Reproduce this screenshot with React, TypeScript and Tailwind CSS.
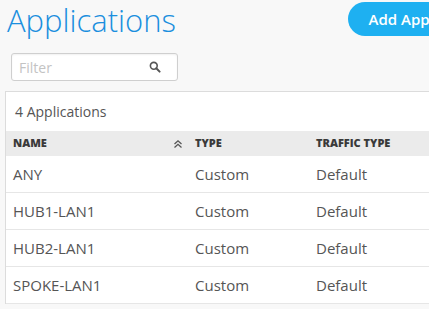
import React from 'react';

const rows = [
  { name: 'ANY', type: 'Custom', traffic: 'Default' },
  { name: 'HUB1-LAN1', type: 'Custom', traffic: 'Default' },
  { name: 'HUB2-LAN1', type: 'Custom', traffic: 'Default' },
  { name: 'SPOKE-LAN1', type: 'Custom', traffic: 'Default' },
];

export default function App() {
  return (
    <div className="h-[309px] w-[429px] overflow-hidden bg-[#f8f8f8] font-['Open_Sans',sans-serif]">
      <div className="flex h-[40px] items-start justify-between">
        <h1 className="ml-[7px] mt-[-1px] whitespace-nowrap text-[31px] font-light leading-[42px] text-[#1b8fde]">Applications</h1>
        <button className="mt-[2px] h-[34px] shrink-0 translate-x-[74px] whitespace-nowrap rounded-full bg-[#1eb0f1] pl-[21px] pr-[20px] text-left text-[15px] font-semibold text-white">
          Add Application
        </button>
      </div>

      <div className="ml-[11px] mt-[13px] flex h-[28px] w-[167px] items-center rounded-[3px] border border-[#cfcfcf] bg-white pl-[7px] pr-[16px] shadow-[inset_0_1px_2px_rgba(0,0,0,0.06)]">
        <span className="flex-1 text-[14px] text-[#c3c3c3]">Filter</span>
        <svg width="12" height="12" viewBox="0 0 12 12" className="text-[#555]">
          <circle cx="4.8" cy="4.8" r="3.4" fill="none" stroke="currentColor" strokeWidth="1.6" />
          <path d="M7.3 7.3 L10.6 10.6" stroke="currentColor" strokeWidth="2" strokeLinecap="round" />
        </svg>
      </div>

      <div className="ml-[5px] mt-[10px] border-l border-t border-[#dcdcdc] bg-white">
        <div className="flex h-[39px] items-center pl-[9px] text-[14px] text-[#555]">4 Applications</div>
        <div className="flex h-[25px] items-center bg-[#ebebeb] text-[11px] font-extrabold text-[#3a3a3a]">
          <div className="flex w-[189px] items-center pl-[7px] pr-[12px]">
            <span className="flex-1">NAME</span>
            <svg width="10" height="10" viewBox="0 0 10 10">
              <path d="M1.5 5 L5 1.8 L8.5 5 M1.5 8.5 L5 5.3 L8.5 8.5" fill="none" stroke="#555" strokeWidth="1.3" />
            </svg>
          </div>
          <div className="w-[121px]">TYPE</div>
          <div className="flex-1 whitespace-nowrap">TRAFFIC TYPE</div>
        </div>
        {rows.map((r) => (
          <div key={r.name} className="flex h-[37px] items-center border-b border-[#e6e6e6] text-[15px] text-[#555]">
            <div className="w-[189px] pl-[7px]">{r.name}</div>
            <div className="w-[121px]">{r.type}</div>
            <div className="flex-1">{r.traffic}</div>
          </div>
        ))}
      </div>
    </div>
  );
}
